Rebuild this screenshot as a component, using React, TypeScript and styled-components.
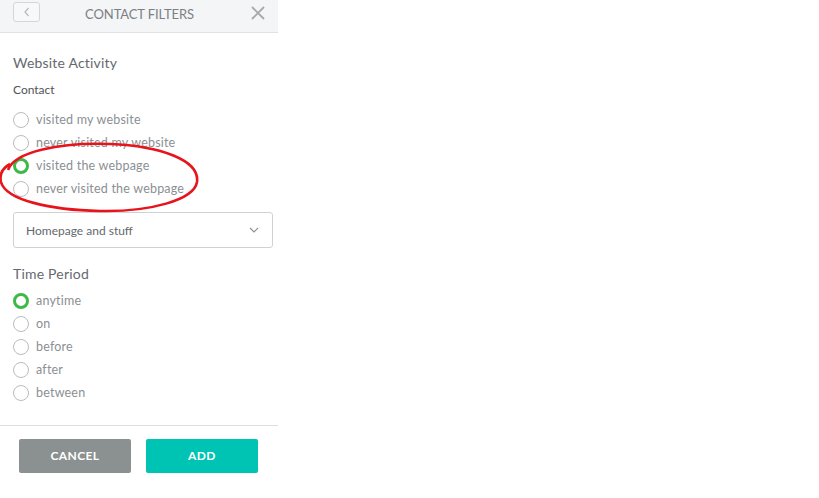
import styled, { createGlobalStyle } from "styled-components";

const GlobalStyle = createGlobalStyle`
    html, body {
        margin: 0;
        padding: 0;
        background: #ffffff;
        font-family: "Lato", "Open Sans", sans-serif;
    }
`;

const Panel = styled.div`
    position: relative;
    width: 278px;
    height: 498px;
    background: #ffffff;
    display: flex;
    flex-direction: column;
`;

const Header = styled.div`
    height: 33px;
    box-sizing: border-box;
    background: #f4f5f7;
    border-bottom: 1px solid #dfe1e4;
    display: flex;
    align-items: flex-start;
    padding: 2px 12px 0 13px;
`;

const BackButton = styled.button`
    width: 27px;
    height: 20px;
    box-sizing: border-box;
    border: 1px solid #d4d6d9;
    border-radius: 3px;
    background: #f7f8f9;
    display: flex;
    align-items: center;
    justify-content: center;
    padding: 0;
`;

const Title = styled.div`
    flex: 1;
    text-align: center;
    font-size: 13px;
    line-height: 24px;
    color: #7b7f83;
    letter-spacing: -0.1px;
`;

const CloseBox = styled.div`
    width: 27px;
    height: 22px;
    display: flex;
    align-items: center;
    justify-content: flex-end;
`;

const Body = styled.div`
    flex: 1;
    padding: 20px 6px 0 13px;
    display: flex;
    flex-direction: column;
`;

const SectionTitle = styled.div<{ $top?: number }>`
    font-size: 14px;
    color: #65696e;
    height: 20px;
    line-height: 20px;
    letter-spacing: 0.2px;
    margin-top: ${(p) => p.$top ?? 0}px;
`;

const SubLabel = styled.div`
    font-size: 12px;
    color: #505458;
    margin-top: 8px;
    height: 17px;
    line-height: 17px;
`;

const RadioList = styled.div<{ $top: number }>`
    display: flex;
    flex-direction: column;
    margin-top: ${(p) => p.$top}px;
`;

const RadioRow = styled.div`
    display: flex;
    align-items: center;
    height: 23px;
    gap: 7px;
`;

const Circle = styled.span<{ $checked?: boolean }>`
    width: 16px;
    height: 16px;
    box-sizing: border-box;
    border-radius: 50%;
    border: ${(p) => (p.$checked ? "3px solid #3db94a" : "1px solid #b9bcbf")};
    background: #fff;
    flex-shrink: 0;
`;

const RadioText = styled.span`
    font-size: 12.5px;
    color: #8b8f93;
    letter-spacing: 0.2px;
`;

const Select = styled.div`
    margin-top: 12px;
    width: 260px;
    height: 36px;
    box-sizing: border-box;
    border: 1px solid #cfd2d5;
    border-radius: 3px;
    display: flex;
    align-items: center;
    justify-content: space-between;
    padding: 0 13px 0 12px;
    font-size: 12px;
    color: #64686d;
`;

const Footer = styled.div`
    border-top: 1px solid #dcdfe2;
    height: 73px;
    display: flex;
    gap: 15px;
    padding: 13px 0 0 19px;
    box-sizing: border-box;
`;

const ActionButton = styled.button<{ $primary?: boolean }>`
    width: 112px;
    height: 34px;
    border: none;
    border-radius: 2px;
    background: ${(p) => (p.$primary ? "#00c4b3" : "#8a9190")};
    color: #ffffff;
    font-family: "Lato", "Open Sans", sans-serif;
    font-weight: 700;
    font-size: 12px;
    letter-spacing: 0.4px;
    padding: 0 0 2px;
`;

const Annotation = styled.svg`
    position: absolute;
    left: 0;
    top: 138px;
    pointer-events: none;
`;

const websiteOptions = [
    { label: "visited my website" },
    { label: "never visited my website" },
    { label: "visited the webpage", checked: true },
    { label: "never visited the webpage" },
];

const timeOptions = [
    { label: "anytime", checked: true },
    { label: "on" },
    { label: "before" },
    { label: "after" },
    { label: "between" },
];

const Radio = ({ label, checked }: { label: string; checked?: boolean }) => (
    <RadioRow>
        <Circle $checked={checked} />
        <RadioText>{label}</RadioText>
    </RadioRow>
);

export default function App() {
    return (
        <>
            <GlobalStyle />
            <Panel>
                <Header>
                    <BackButton>
                        <svg width="10" height="12" viewBox="0 0 10 12">
                            <path d="M6.5 2 L3 6 L6.5 10" fill="none" stroke="#b7babd" strokeWidth="1.2" />
                        </svg>
                    </BackButton>
                    <Title>CONTACT FILTERS</Title>
                    <CloseBox>
                        <svg width="16" height="16" viewBox="0 0 16 16">
                            <path d="M2 2 L14 14 M14 2 L2 14" stroke="#a6a9ad" strokeWidth="1.8" />
                        </svg>
                    </CloseBox>
                </Header>
                <Body>
                    <SectionTitle>Website Activity</SectionTitle>
                    <SubLabel>Contact</SubLabel>
                    <RadioList $top={10}>
                        {websiteOptions.map((o) => (
                            <Radio key={o.label} {...o} />
                        ))}
                    </RadioList>
                    <Select>
                        <span>Homepage and stuff</span>
                        <svg width="10" height="6" viewBox="0 0 10 6">
                            <path d="M1 1 L5 5 L9 1" fill="none" stroke="#8d9195" strokeWidth="1.1" />
                        </svg>
                    </Select>
                    <SectionTitle $top={16}>Time Period</SectionTitle>
                    <RadioList $top={5}>
                        {timeOptions.map((o) => (
                            <Radio key={o.label} {...o} />
                        ))}
                    </RadioList>
                </Body>
                <Footer>
                    <ActionButton>CANCEL</ActionButton>
                    <ActionButton $primary>ADD</ActionButton>
                </Footer>
                <Annotation width="210" height="80" viewBox="0 0 210 80">
                    <path
                        d="M8 32 C 14 14, 60 4, 110 6 C 160 8, 200 22, 197 44 C 194 62, 150 74, 100 73 C 50 72, 6 62, 1 44 C -1 36, 3 30, 10 26"
                        fill="none"
                        stroke="#e8141b"
                        strokeWidth="2.6"
                    />
                </Annotation>
            </Panel>
        </>
    );
}
